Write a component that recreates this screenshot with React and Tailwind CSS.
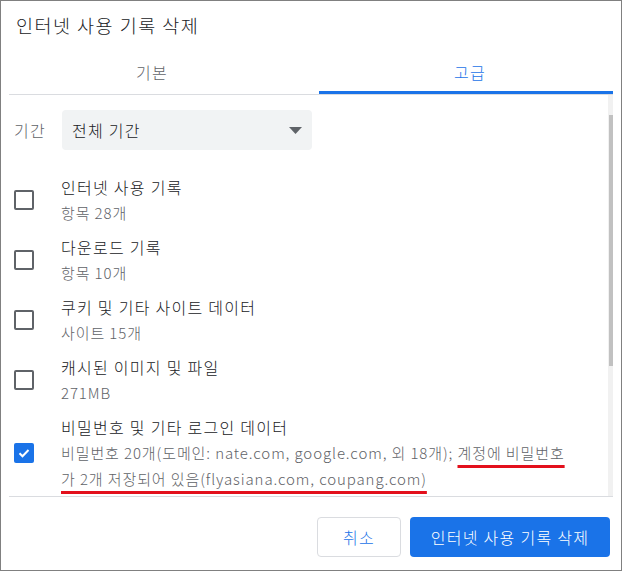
const items = [
	{ title: '인터넷 사용 기록', sub: '항목 28개' },
	{ title: '다운로드 기록', sub: '항목 10개' },
	{ title: '쿠키 및 기타 사이트 데이터', sub: '사이트 15개' },
	{ title: '캐시된 이미지 및 파일', sub: '271MB' },
];

const Checkbox = ({ checked }) =>
	checked ? (
		<div className="w-[20px] h-[20px] rounded-[2px] bg-[#1a73e8] flex items-center justify-center shrink-0">
			<svg width="14" height="14" viewBox="0 0 14 14" fill="none">
				<path d="M2.5 7.2l3 3 6-6.2" stroke="white" strokeWidth="2" />
			</svg>
		</div>
	) : (
		<div className="w-[20px] h-[20px] rounded-[2px] border-2 border-[#5f6368] shrink-0" />
	);

const Item = ({ checked, title, children }) => (
	<div className="flex items-center py-[4px]">
		<Checkbox checked={checked} />
		<div className="ml-[27px] leading-[26px]">
			<div className="text-[16px] tracking-[0.08em] text-[#202124]">{title}</div>
			<div className="text-[15px] tracking-[0.06em] text-[#5f6368]">{children}</div>
		</div>
	</div>
);

export default function App() {
	return (
		<div
			className="w-[622px] h-[571px] border border-[#808080] bg-white flex flex-col font-light"
			style={{ fontFamily: '"Noto Sans CJK KR", "Noto Sans", sans-serif' }}
		>
			<div className="h-[49px] pl-[15px] pt-[11px] text-[18.5px] tracking-[0.08em] leading-[26px] text-[#202124]">
				인터넷 사용 기록 삭제
			</div>

			{/* tabs */}
			<div className="mx-[8px] flex border-b border-[#dadce0] text-[16px] tracking-[0.08em]">
				<div className="flex-1 h-[44px] flex items-center justify-center pr-[24px] text-[#5f6368]">
					기본
				</div>
				<div className="flex-1 h-[44px] flex items-center justify-center pl-[8px] text-[#1a73e8] border-b-[3px] border-[#1a73e8] -mb-px pt-[3px]">
					고급
				</div>
			</div>

			{/* scroll area */}
			<div className="mx-[8px] h-[402px] flex border-b border-[#dadce0] overflow-hidden">
				<div className="flex-1 pl-[5px]">
					<div className="flex items-center pt-[15px] tracking-[0.08em]">
						<span className="w-[48px] text-[16px] text-[#5f6368]">기간</span>
						<div className="w-[250px] h-[40px] rounded-[4px] bg-[#f1f3f4] flex items-center justify-between pl-[10px] pr-[10px] text-[16px] text-[#202124]">
							<span>전체 기간</span>
							<svg width="13" height="7" viewBox="0 0 13 7">
								<path d="M0 0h13L6.5 7z" fill="#5f6368" />
							</svg>
						</div>
					</div>

					<div className="mt-[20px]">
						{items.map((it) => (
							<Item key={it.title} title={it.title}>
								{it.sub}
							</Item>
						))}
						<Item checked title="비밀번호 및 기타 로그인 데이터">
							비밀번호 20개(도메인: nate.com, google.com, 외 18개);{' '}
							<span className="underline decoration-[#e3101c] decoration-[3px] underline-offset-[6px]">
								계정에 비밀번호
							</span>
							<br />
							<span className="underline decoration-[#e3101c] decoration-[3px] underline-offset-[6px]">
								가 2개 저장되어 있음(flyasiana.com, coupang.com)
							</span>
						</Item>
					</div>
				</div>

				{/* scrollbar */}
				<div className="w-[5px] bg-[#f1f1f1] flex justify-center">
					<div className="w-[4px] h-[251px] mt-[20px] bg-[#c1c1c1]" />
				</div>
			</div>

			{/* footer */}
			<div className="flex justify-end gap-[9px] pt-[20px] pr-[11px] tracking-[0.08em]">
				<button className="w-[84px] h-[40px] rounded-[4px] border border-[#dadce0] text-[16px] text-[#1a73e8] bg-white">
					취소
				</button>
				<button className="w-[200px] h-[40px] rounded-[4px] bg-[#1a73e8] text-[16px] text-white">
					인터넷 사용 기록 삭제
				</button>
			</div>
		</div>
	);
}
